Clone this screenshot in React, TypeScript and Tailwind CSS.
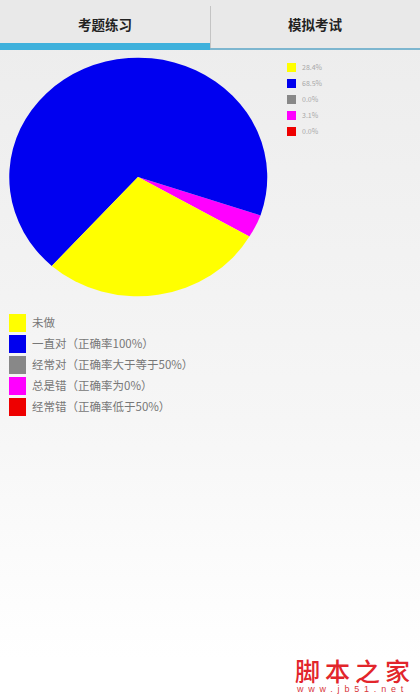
import React from 'react';

const FONT = "font-['Noto_Sans_CJK_SC',sans-serif]";

const smallLegend = [
    { color: 'bg-[#ffff00]', value: '28.4%' },
    { color: 'bg-[#0000ee]', value: '68.5%' },
    { color: 'bg-[#888888]', value: '0.0%' },
    { color: 'bg-[#ff00ff]', value: '3.1%' },
    { color: 'bg-[#ee0000]', value: '0.0%' },
];

const bigLegend = [
    { color: 'bg-[#ffff00]', label: '未做' },
    { color: 'bg-[#0000ee]', label: '一直对（正确率100%）' },
    { color: 'bg-[#888888]', label: '经常对（正确率大于等于50%）' },
    { color: 'bg-[#ff00ff]', label: '总是错（正确率为0%）' },
    { color: 'bg-[#ee0000]', label: '经常错（正确率低于50%）' },
];

function PieChart() {
    return (
        <svg width="280" height="255" viewBox="0 0 280 255" className="shrink-0">
            <path d="M138 127 L260.5 165.4 A129 119.5 0 0 1 249.4 186.6 Z" fill="#ff00ff" />
            <path d="M138 127 L51.8 215.9 A129 119.5 0 1 1 260.5 165.4 Z" fill="#0000f0" />
            <path d="M138 127 L249.4 186.6 A129 119.5 0 0 1 51.8 215.9 Z" fill="#ffff00" />
        </svg>
    );
}

export default function App() {
    return (
        <div className={`${FONT} w-[420px] h-[700px] overflow-hidden flex flex-col bg-gradient-to-b from-[#ececec] via-[#f6f6f6] via-[60%] to-white to-[94%]`}>
            <div className="h-[50px] flex shrink-0 bg-[#e9e9e9]">
                <div className="flex-1 flex flex-col">
                    <div className="flex-1 flex items-center justify-center pt-[5px] text-[13.5px] font-bold text-[#222222]">考题练习</div>
                    <div className="h-[7px] bg-[#3fb1dc]" />
                </div>
                <div className="flex-1 flex flex-col">
                    <div className="flex-1 flex items-center justify-center text-[13.5px] font-bold text-[#222222] relative">
                        <span className="absolute left-0 top-[6px] bottom-0 w-px bg-[#c4c4c4]" />
                        模拟考试
                    </div>
                    <div className="h-[2px] bg-[#7db6cf]" />
                </div>
            </div>

            <div className="flex items-start">
                <PieChart />
                <div className="flex flex-col gap-[7px] pt-[13px] pl-[7px]">
                    {smallLegend.map((item) => (
                        <div key={item.color} className="flex items-center gap-[6px] h-[9px]">
                            <span className={`w-[9px] h-[9px] ${item.color}`} />
                            <span className="text-[7px] leading-none text-[#a8a8a8]">{item.value}</span>
                        </div>
                    ))}
                </div>
            </div>

            <div className="flex flex-col gap-[3.5px] pl-[9px] pt-[9px]">
                {bigLegend.map((item) => (
                    <div key={item.color} className="flex items-center gap-[6px] h-[17.5px]">
                        <span className={`w-[17px] h-[17.5px] ${item.color}`} />
                        <span className="text-[11.5px] leading-none text-[#777777]">{item.label}</span>
                    </div>
                ))}
            </div>

            <div className="mt-auto self-end pr-[5px] pb-[5px] flex flex-col items-center">
                <div className="font-['Noto_Sans_CJK_SC',serif] font-medium text-[25px] leading-[26px] tracking-[5px] text-[#e2252b] pl-[5px] pb-[1px]">脚本之家</div>
                <div className="font-['Liberation_Sans',sans-serif] text-[9px] leading-[11px] tracking-[4.8px] text-[#d8383c]">www.jb51.net</div>
            </div>
        </div>
    );
}
